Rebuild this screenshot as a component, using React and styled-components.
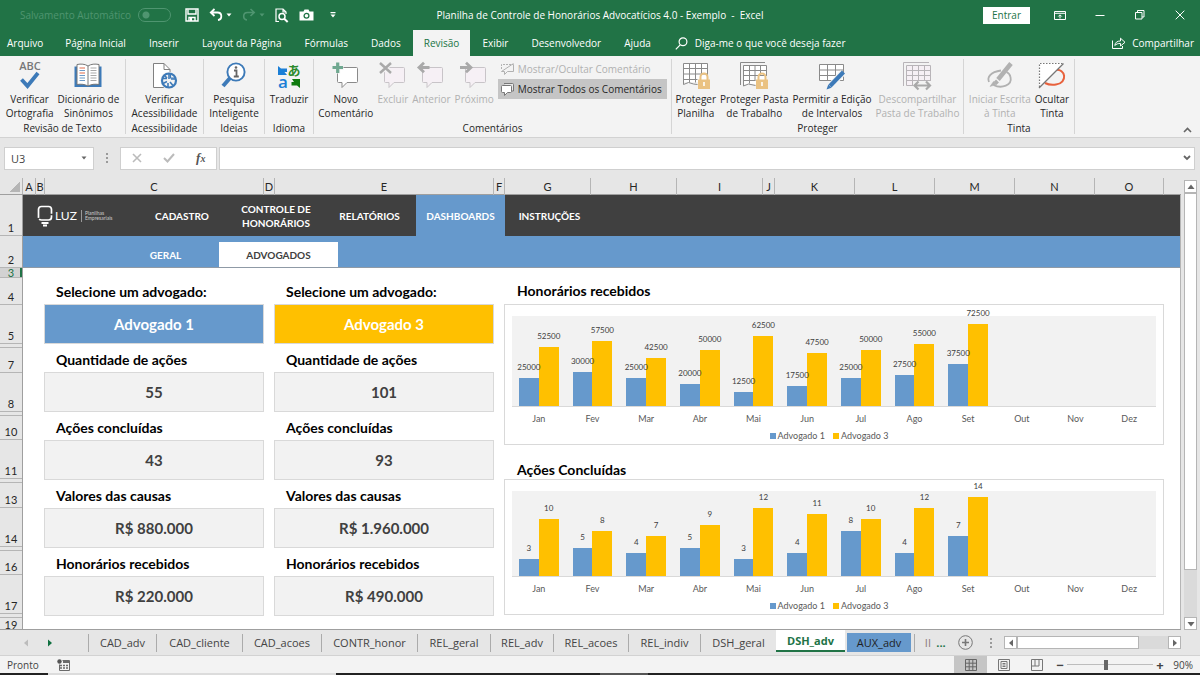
import React, { useState } from 'react';
import styled, { createGlobalStyle } from 'styled-components';

const UI_FONT = '"Open Sans", "Noto Sans", sans-serif';
const SHEET_FONT = 'Lato, "Open Sans", sans-serif';

const BLUE = '#6699cc';
const YELLOW = '#ffc000';

const RIBBON_TABS = [
  'Arquivo',
  'Página Inicial',
  'Inserir',
  'Layout da Página',
  'Fórmulas',
  'Dados',
  'Revisão',
  'Exibir',
  'Desenvolvedor',
  'Ajuda',
];

const COLUMNS = [
  ['A', 13],
  ['B', 9],
  ['C', 219],
  ['D', 11],
  ['E', 219],
  ['F', 11],
  ['G', 86],
  ['H', 86],
  ['I', 86],
  ['J', 12],
  ['K', 80],
  ['L', 80],
  ['M', 80],
  ['N', 80],
  ['O', 69],
  ['', 17],
];

const ROWS = [
  ['1', 41],
  ['2', 32],
  ['3', 10],
  ['4', 27],
  ['5', 39],
  ['', 4],
  ['7', 25],
  ['8', 39],
  ['', 4],
  ['10', 24],
  ['11', 39],
  ['', 4],
  ['13', 25],
  ['14', 39],
  ['', 4],
  ['16', 24],
  ['17', 39],
  ['', 4],
  ['19', 11],
];

const SHEET_TABS = [
  ['CAD_adv', 68],
  ['CAD_cliente', 86],
  ['CAD_acoes', 79],
  ['CONTR_honor', 96],
  ['REL_geral', 73],
  ['REL_adv', 63],
  ['REL_acoes', 75],
  ['REL_indiv', 72],
  ['DSH_geral', 76],
];

const MONTHS = ['Jan', 'Fev', 'Mar', 'Abr', 'Mai', 'Jun', 'Jul', 'Ago', 'Set', 'Out', 'Nov', 'Dez'];

const FEES = [
  [25000, 52500],
  [30000, 57500],
  [25000, 42500],
  [20000, 50000],
  [12500, 62500],
  [17500, 47500],
  [25000, 50000],
  [27500, 55000],
  [37500, 72500],
];

const CLOSED = [
  [3, 10],
  [5, 8],
  [4, 7],
  [5, 9],
  [3, 12],
  [4, 11],
  [8, 10],
  [4, 12],
  [7, 14],
];

const LAWYERS = ['Advogado 1', 'Advogado 2', 'Advogado 3'];

/* ---------- icons ---------- */

const SaveIcon = () => (
  <svg width="14" height="14" viewBox="0 0 14 14" fill="none" stroke="#fff" strokeWidth="1.4">
    <path d="M1 1h12v12H1z" />
    <path d="M3 1.5v4.5h8V1.5M4 13V9.5h6V13" />
    <path d="M5 10h2v3H5z" fill="#fff" stroke="none" />
  </svg>
);

const UndoIcon = () => (
  <svg width="14" height="14" viewBox="0 0 14 14" fill="none" stroke="currentColor" strokeWidth="1.8">
    <path d="M5.5 1L1.8 4.5l3.7 3.5M2 4.5h6.5c5 0 5 7 .5 7.5" />
  </svg>
);

const RedoIcon = () => (
  <svg width="14" height="14" viewBox="0 0 14 14" fill="none" stroke="currentColor" strokeWidth="1.6">
    <path d="M8.5 1l3.7 3.5L8.5 8M12 4.5H5.5c-5 0-5 7-.5 7.5" />
  </svg>
);

const Caret = () => (
  <svg width="6" height="4" viewBox="0 0 6 4">
    <path d="M.5.5h5L3 3.5z" fill="currentColor" />
  </svg>
);

const PreviewIcon = () => (
  <svg width="14" height="15" viewBox="0 0 14 15" fill="none" stroke="#fff" strokeWidth="1.2">
    <path d="M4 13.5H1V1h7l3 3v2M8 1v3h3" />
    <circle cx="7" cy="8.5" r="3" strokeWidth="1.5" />
    <path d="M9.2 10.8l3.5 3.2" strokeWidth="2" />
  </svg>
);

const CameraIcon = () => (
  <svg width="15" height="12" viewBox="0 0 15 12">
    <path d="M.5 2.500h4L5.500.5h4l1 2h4V11.500H.5z" fill="#fff" />
    <circle cx="7.5" cy="6.8" r="2.400" fill="none" stroke="#217346" strokeWidth="1.3" />
  </svg>
);

const MoreIcon = () => (
  <svg width="6" height="8" viewBox="0 0 6 8" fill="#fff">
    <path d="M.5 1h5v1.2h-5zM.5 3.5h5L3 6.5z" />
  </svg>
);

const RibbonOptionsIcon = () => (
  <svg width="12" height="9" viewBox="0 0 12 9" fill="none" stroke="#fff">
    <path d="M.5.5h11v8H.5zM.5 2.3h11" />
    <path d="M6 7.5V4M4.3 5.5L6 3.8l1.7 1.7" />
  </svg>
);

const MinimizeIcon = () => (
  <svg width="10" height="10" viewBox="0 0 10 10" stroke="#fff">
    <path d="M.5 5.5h9" />
  </svg>
);

const RestoreIcon = () => (
  <svg width="10" height="10" viewBox="0 0 10 10" fill="none" stroke="#fff">
    <path d="M.5 2.5h6.500v6.500H.5zM2.500 2.500V.5H9v6.500H7" />
  </svg>
);

const CloseIcon = () => (
  <svg width="10" height="10" viewBox="0 0 10 10" stroke="#fff">
    <path d="M.7.7l8.600 8.600M9.300.7L.7 9.300" />
  </svg>
);

const SearchIcon = () => (
  <svg width="13" height="13" viewBox="0 0 13 13" fill="none" stroke="#fff" strokeWidth="1.2">
    <circle cx="8" cy="4.8" r="3.9" />
    <path d="M5.2 7.8L.8 12.3" />
  </svg>
);

const ShareIcon = () => (
  <svg width="14" height="12" viewBox="0 0 14 12" fill="none" stroke="#fff">
    <path d="M.5 3.5v8h10V9" />
    <path d="M2.8 8.5c.4-3.2 2.4-4.5 5.700-4.500V1.200L13 5.300 8.500 9V6.500C6 6.400 4.300 7 2.800 8.500z" />
  </svg>
);

const SpellIcon = () => (
  <svg width="28" height="30" viewBox="0 0 28 30">
    <text x="14" y="9" textAnchor="middle" fontFamily="Open Sans" fontSize="11" fontWeight="600" fill="#777">
      ABC
    </text>
    <path d="M5.5 18.5l6 6.500L22 12" fill="none" stroke="#3d7ab8" strokeWidth="3.8" />
  </svg>
);

const BookIcon = () => (
  <svg width="28" height="26" viewBox="0 0 28 26">
    <path d="M.5 3.5h27V24H.5z" fill="#3d7ab8" />
    <path d="M3 1.5c4-.8 8-.5 11 1.500 3-2 7-2.300 11-1.500v20c-4-.6-8-.3-11 1.500-3-1.800-7-2.100-11-1.500z" fill="#fff" stroke="#777" />
    <path d="M14 3v20" stroke="#777" />
    <path d="M5.5 5h5.500M5.500 10h5.500" stroke="#e06a4a" strokeWidth="1.2" />
    <path d="M5.5 7.5h5.500M5.500 12.500h5.500M5.500 15h5.500M5.500 17.500h5.500" stroke="#6d9bc8" />
    <path d="M16.5 5h6M16.500 7.500h6M16.500 10h6M16.500 12.500h6M16.500 15h6M16.500 17.500h6" stroke="#a9a9a9" />
  </svg>
);

const AccessIcon = () => (
  <svg width="28" height="28" viewBox="0 0 28 28" fill="none">
    <path d="M3.5 1.5h10.500l6 6V25.500H3.500z" fill="#fff" stroke="#808080" />
    <path d="M14 1.5v6h6" stroke="#808080" />
    <circle cx="19" cy="18.5" r="8.7" fill="#f3f3f3" />
    <circle cx="19" cy="18.5" r="7" stroke="#3d7ab8" strokeWidth="2.2" />
    <path d="M19 12v5M12 16.500h5M13 21.500l4-2M25 17h-4M20 20l3 3.500M18 21v4M14.500 13.500l2.500 2.500" stroke="#3d7ab8" strokeWidth="1.6" />
    <path d="M20.500 12v4H25" stroke="#3d7ab8" strokeWidth="1.2" />
  </svg>
);

const InsightIcon = () => (
  <svg width="26" height="27" viewBox="0 0 26 27" fill="none">
    <path d="M9.5 15.5L2 24" stroke="#3d7ab8" strokeWidth="4" />
    <circle cx="15" cy="10" r="8.600" fill="#fff" stroke="#3d7ab8" strokeWidth="1.9" />
    <path d="M13 8.5h2.500V14M12.800 14.500h5" stroke="#666" strokeWidth="1.8" />
    <circle cx="15" cy="5.5" r="1.300" fill="#666" />
  </svg>
);

const TranslateIcon = () => (
  <svg width="26" height="28" viewBox="0 0 26 28">
    <text x="7" y="26" textAnchor="middle" fontFamily="Open Sans" fontSize="17" fontWeight="600" fill="#1b7fd6">
      a
    </text>
    <text x="18" y="13" textAnchor="middle" fontFamily="Noto Sans CJK JP" fontSize="13" fontWeight="700" fill="#2c8a2c">
      あ
    </text>
    <path d="M2 4l3 2.500h6v3.500H8.500l2.500 3H2z" fill="#1b7fd6" />
    <path d="M24 17v9l-3-2.500h-5.500v-3.500H18L16 17z" fill="#107c10" />
  </svg>
);

const bubble = 'M6.5 5.5h18a1 1 0 011 1v13a1 1 0 01-1 1H15l-5 5v-5H6.500a1 1 0 01-1-1v-13a1 1 0 011-1z';

const NewCommentIcon = () => (
  <svg width="28" height="28" viewBox="0 0 28 28">
    <path d={bubble} fill="#fff" stroke="#8a8a8a" />
    <path d="M0 5.5h11.500M5.700 0v11.500" stroke="#f3f3f3" strokeWidth="5" />
    <path d="M.5 5.5h10.500M5.700.5v10.500" stroke="#6fa890" strokeWidth="3.2" />
  </svg>
);

const DeleteCommentIcon = () => (
  <svg width="28" height="28" viewBox="0 0 28 28">
    <path d={bubble} fill="#f6f0f5" stroke="#c8c4c8" />
    <path d="M1 1l11 10M12 1L1 11" stroke="#f3f3f3" strokeWidth="4.5" />
    <path d="M1 1l11 10M12 1L1 11" stroke="#a9a9a9" strokeWidth="2.4" />
  </svg>
);

const PrevCommentIcon = () => (
  <svg width="28" height="28" viewBox="0 0 28 28">
    <path d={bubble} fill="#f6f0f5" stroke="#c8c4c8" />
    <path d="M12.5 5.500H2M7 .8L2 5.500l5 4.700" fill="none" stroke="#a9a9a9" strokeWidth="2.8" />
  </svg>
);

const NextCommentIcon = () => (
  <svg width="28" height="28" viewBox="0 0 28 28">
    <path d={bubble} fill="#f6f0f5" stroke="#c8c4c8" />
    <path d="M0 5.5h11M6 .8l5 4.700-5 4.700" fill="none" stroke="#a9a9a9" strokeWidth="2.8" />
  </svg>
);

const ToggleCommentIcon = () => (
  <svg width="13" height="13" viewBox="0 0 13 13" fill="none" stroke="#b1b1b1">
    <path d="M.5 6V1.500h12" strokeDasharray="2 1" />
    <path d="M12.5 1.500v7H6.500l-3 3v-3h-3l12-8" />
  </svg>
);

const AllCommentsIcon = () => (
  <svg width="13" height="13" viewBox="0 0 13 13" fill="#fff" stroke="#777">
    <path d="M3 .5h8.500a1 1 0 011 1V8h-2" fill="#e8e8e8" />
    <path d="M1.5 2.500h8a1 1 0 011 1v5a1 1 0 01-1 1H6.500l-3 3v-3h-2a1 1 0 01-1-1v-5a1 1 0 011-1z" />
  </svg>
);

const Lock = () => (
  <g>
    <path d="M18.5 18v-3a3.500 3.500 0 017 0v3" fill="none" stroke="#eac282" strokeWidth="2" />
    <path d="M16 17.500h12V27H16z" fill="#eac282" />
    <path d="M22 20v4" stroke="#fff" strokeWidth="1.6" />
  </g>
);

const ProtectSheetIcon = () => (
  <svg width="28" height="28" viewBox="0 0 28 28" fill="none">
    <path d="M1.5 1.500h24V20H1.500z" fill="#fff" />
    <path d="M1.5 22.500v-21h24V14M1.500 6.500h24M1.500 12h24M1.500 17.500h14M7.500 1.500v19M13.500 1.500v19M19.500 1.500v11M1.500 22.500l5-2 5 1.500 4 .5" stroke="#8a8a8a" />
    <Lock />
  </svg>
);

const ProtectBookIcon = () => (
  <svg width="28" height="28" viewBox="0 0 28 28" fill="none">
    <path d="M.5 23V.5H25" stroke="#8a8a8a" />
    <path d="M3.5 3.500h23V22H3.500z" fill="#fff" />
    <path d="M3.5 24V3.500h23V14M3.500 8.500h23M3.500 13.500h23M3.500 18.500h12M9.500 3.500v18M15 3.500v15M20.500 3.500v9M3.500 24l5-2 7 1.500" stroke="#8a8a8a" />
    <Lock />
  </svg>
);

const AllowEditIcon = () => (
  <svg width="28" height="28" viewBox="0 0 28 28" fill="none">
    <path d="M1.5 2.500h24v16h-24z" fill="#fff" stroke="#8a8a8a" />
    <path d="M1.5 8h24M1.500 13.500h24M9.500 2.500v16M17.500 2.500v16" stroke="#8a8a8a" />
    <path d="M25 10.500L11.500 25" stroke="#f3f3f3" strokeWidth="6.5" />
    <path d="M25.5 10L12 24" stroke="#3d7ab8" strokeWidth="4.2" />
    <path d="M8.5 27.500l1.800-5 3.200 3.200z" fill="#3d7ab8" />
  </svg>
);

const UnshareIcon = () => (
  <svg width="28" height="28" viewBox="0 0 28 28" fill="none">
    <path d="M.5 24V.5H26" stroke="#b8b4b8" />
    <path d="M3.5 3.500h24v20h-24z" fill="#f6f0f5" stroke="#b8b4b8" />
    <path d="M3.5 8.500h24M3.500 13.500h24M3.500 18.500h24M9.500 3.500v20M15.500 3.500v20M21.500 3.500v20" stroke="#b8b4b8" />
    <path d="M10 23h18" stroke="#f3f3f3" strokeWidth="8" />
    <path d="M11.5 23.500H27M15.500 19.500l-4 4 4 4M23 19.500l4 4-4 4" stroke="#a9a9a9" strokeWidth="2.2" />
  </svg>
);

const InkIcon = () => (
  <svg width="28" height="28" viewBox="0 0 28 28" fill="none" stroke="#b1b1b1">
    <path d="M15 8.500C4 10 1 15.500 3 20M7.500 23c8 4 19 .5 17-8-.5-2.500-2-4-4-5" strokeWidth="1.8" />
    <path d="M25 1.500L12 17.500" strokeWidth="4.5" />
    <path d="M11.5 19l-2.500 2.500" strokeWidth="4" />
    <path d="M4 24.500l3.500-5 2.500 3z" fill="#b1b1b1" strokeWidth=".5" />
  </svg>
);

const HideInkIcon = () => (
  <svg width="28" height="28" viewBox="0 0 28 28" fill="none">
    <path d="M17 8c11-2 13 13 1 14.500-4 .6-8 0-11-1.500" stroke="#e8613c" strokeWidth="2" />
    <path d="M1 1h25L1 26z" fill="#fff" />
    <path d="M25.5 1.500L1 26" stroke="#777" strokeWidth="1.2" />
    <path d="M1.5 25V1.500H25" stroke="#777" strokeWidth="1.2" strokeDasharray="1.5 1.5" />
  </svg>
);

const LuzBulb = () => (
  <svg width="16" height="22" viewBox="0 0 16 22" fill="none" stroke="#fff">
    <path d="M4.5 1.500h7q3 0 3 3v7.500q0 3-3 3h-7q-3 0-3-3V4.500q0-3 3-3z" strokeWidth="1.7" strokeDasharray="16 1.5" />
    <path d="M4.5 18h7M6 20.500h4" strokeWidth="1.8" />
  </svg>
);

const RecordIcon = () => (
  <svg width="13" height="12" viewBox="0 0 13 12" fill="none" stroke="#6a6a6a">
    <path d="M5.5 1.500h7v10h-10V5.500" />
    <path d="M6 3h6.500" strokeWidth="2" />
    <path d="M3 6.500h9M3 9h9" strokeDasharray="2 1" strokeWidth="1.3" />
    <circle cx="2.5" cy="2.5" r="2.2" fill="#555" stroke="none" />
  </svg>
);

const GridViewIcon = () => (
  <svg width="12" height="12" viewBox="0 0 12 12" fill="none" stroke="#666">
    <path d="M.5.5h11v11H.5zM.5 4.200h11M.5 7.800h11M4.200.5v11M7.800.5v11" />
  </svg>
);

const PageViewIcon = () => (
  <svg width="12" height="12" viewBox="0 0 12 12" fill="none" stroke="#777">
    <path d="M.5.5h11v11H.5zM3 2.500h6v7H3zM4.500 4.500h3M4.500 6h3M4.500 7.500h3" />
  </svg>
);

const BreakViewIcon = () => (
  <svg width="12" height="12" viewBox="0 0 12 12" fill="none" stroke="#777">
    <path d="M.5.5h11v11H.5zM4 .5V7M.5 7h7.500V.5" />
  </svg>
);

const PlusCircle = () => (
  <svg width="15" height="15" viewBox="0 0 15 15" fill="none" stroke="#777">
    <circle cx="7.5" cy="7.5" r="6.8" />
    <path d="M7.5 4v7M4 7.500h7" strokeWidth="1.6" />
  </svg>
);

const ARROWS = {
  up: 'M4 1.5L7.5 6H.5z',
  down: 'M.5 2h7L4 6.5z',
  left: 'M6 .5v7L2 4z',
  right: 'M2 .5v7L6 4z',
};

const Arrow = ({ dir }) => (
  <svg width="8" height="8" viewBox="0 0 8 8">
    <path d={ARROWS[dir]} fill="currentColor" />
  </svg>
);

/* ---------- pieces ---------- */

function BigButton({ icon, lines, disabled }) {
  return (
    <RibbonButton disabled={disabled}>
      <IconSlot>{icon}</IconSlot>
      {lines.map((line) => (
        <span key={line}>{line}</span>
      ))}
    </RibbonButton>
  );
}

function Group({ name, width, children }) {
  return (
    <RibbonGroup $width={width} aria-label={name}>
      <GroupBody>{children}</GroupBody>
      <GroupName>{name}</GroupName>
    </RibbonGroup>
  );
}

function LawyerColumn({ id, initial, color, stats }) {
  const [lawyer, setLawyer] = useState(initial);
  return (
    <Fields>
      <Field>
        <FieldLabel as="label" htmlFor={id}>
          Selecione um advogado:
        </FieldLabel>
        <LawyerSelect id={id} $color={color} value={lawyer} onChange={(e) => setLawyer(e.target.value)}>
          {LAWYERS.map((name) => (
            <option key={name}>{name}</option>
          ))}
        </LawyerSelect>
      </Field>
      {stats.map(([label, value]) => (
        <Field key={label}>
          <FieldLabel>{label}</FieldLabel>
          <StatBox>{value}</StatBox>
        </Field>
      ))}
    </Fields>
  );
}

function Chart({ data, max, height }) {
  return (
    <ChartBox>
      <Plot $height={height}>
        {MONTHS.map((month, i) => (
          <Month key={month}>
            {(data[i] || []).map((value, s) => (
              <Series key={s}>
                <ValueLabel>{value}</ValueLabel>
                <Bar $color={s === 0 ? BLUE : YELLOW} style={{ height: `${(value / max) * 100}%` }} />
              </Series>
            ))}
          </Month>
        ))}
      </Plot>
      <Axis>
        {MONTHS.map((month) => (
          <span key={month}>{month}</span>
        ))}
      </Axis>
      <Legend>
        <LegendItem $color={BLUE}>Advogado 1</LegendItem>
        <LegendItem $color={YELLOW}>Advogado 3</LegendItem>
      </Legend>
    </ChartBox>
  );
}

function App() {
  const [zoom, setZoom] = useState(45);

  return (
    <>
      <GlobalStyle />
      <Page>
        <TitleBar>
          <QuickAccess>
            <AutoSave>
              Salvamento Automático
              <Switch type="checkbox" disabled />
            </AutoSave>
            <ToolButton aria-label="Salvar"><SaveIcon /></ToolButton>
            <ToolButton aria-label="Desfazer"><UndoIcon /><Caret /></ToolButton>
            <ToolButton aria-label="Refazer" disabled><RedoIcon /><Caret /></ToolButton>
            <ToolButton aria-label="Visualizar impressão"><PreviewIcon /></ToolButton>
            <ToolButton aria-label="Câmera"><CameraIcon /></ToolButton>
            <ToolButton aria-label="Personalizar"><MoreIcon /></ToolButton>
          </QuickAccess>
          <DocTitle>Planilha de Controle de Honorários Advocatícios 4.0 - Exemplo&nbsp; -&nbsp; Excel</DocTitle>
          <WindowButtons>
            <SignIn>Entrar</SignIn>
            <WindowButton aria-label="Opções da faixa"><RibbonOptionsIcon /></WindowButton>
            <WindowButton aria-label="Minimizar"><MinimizeIcon /></WindowButton>
            <WindowButton aria-label="Restaurar"><RestoreIcon /></WindowButton>
            <WindowButton aria-label="Fechar"><CloseIcon /></WindowButton>
          </WindowButtons>
        </TitleBar>

        <TabBar>
          {RIBBON_TABS.map((tab) => (
            <RibbonTab key={tab} $active={tab === 'Revisão'}>
              {tab}
            </RibbonTab>
          ))}
          <TellMe>
            <SearchIcon />
            Diga-me o que você deseja fazer
          </TellMe>
          <Share>
            <ShareIcon />
            Compartilhar
          </Share>
        </TabBar>

        <Ribbon>
          <Group name="Revisão de Texto" width={126}>
            <BigButton icon={<SpellIcon />} lines={['Verificar', 'Ortografia']} />
            <BigButton icon={<BookIcon />} lines={['Dicionário de', 'Sinônimos']} />
          </Group>
          <Group name="Acessibilidade" width={78}>
            <BigButton icon={<AccessIcon />} lines={['Verificar', 'Acessibilidade']} />
          </Group>
          <Group name="Ideias" width={61}>
            <BigButton icon={<InsightIcon />} lines={['Pesquisa', 'Inteligente']} />
          </Group>
          <Group name="Idioma" width={49}>
            <BigButton icon={<TranslateIcon />} lines={['Traduzir']} />
          </Group>
          <Group name="Comentários" width={358}>
            <BigButton icon={<NewCommentIcon />} lines={['Novo', 'Comentário']} />
            <BigButton icon={<DeleteCommentIcon />} lines={['Excluir']} disabled />
            <BigButton icon={<PrevCommentIcon />} lines={['Anterior']} disabled />
            <BigButton icon={<NextCommentIcon />} lines={['Próximo']} disabled />
            <SmallButtons>
              <SmallButton disabled>
                <ToggleCommentIcon />
                Mostrar/Ocultar Comentário
              </SmallButton>
              <SmallButton $pressed>
                <AllCommentsIcon />
                Mostrar Todos os Comentários
              </SmallButton>
            </SmallButtons>
          </Group>
          <Group name="Proteger" width={292}>
            <BigButton icon={<ProtectSheetIcon />} lines={['Proteger', 'Planilha']} />
            <BigButton icon={<ProtectBookIcon />} lines={['Proteger Pasta', 'de Trabalho']} />
            <BigButton icon={<AllowEditIcon />} lines={['Permitir a Edição', 'de Intervalos']} />
            <BigButton icon={<UnshareIcon />} lines={['Descompartilhar', 'Pasta de Trabalho']} disabled />
          </Group>
          <Group name="Tinta" width={111}>
            <BigButton icon={<InkIcon />} lines={['Iniciar Escrita', 'à Tinta']} disabled />
            <BigButton icon={<HideInkIcon />} lines={['Ocultar', 'Tinta']} />
          </Group>
          <Collapse aria-label="Recolher faixa">
            <svg width="9" height="6" viewBox="0 0 9 6" fill="none" stroke="#666" strokeWidth="1.6">
              <path d="M1 5l3.5-3.5L8 5" />
            </svg>
          </Collapse>
        </Ribbon>

        <FormulaBar>
          <NameBox>
            <NameInput aria-label="Caixa de nome" defaultValue="U3" />
            <Caret />
          </NameBox>
          <Dots />
          <FormulaButtons>
            <FormulaButton aria-label="Cancelar" disabled>
              <svg width="10" height="10" viewBox="0 0 10 10" stroke="#bbb" strokeWidth="1.6">
                <path d="M1 1l8 8M9 1L1 9" />
              </svg>
            </FormulaButton>
            <FormulaButton aria-label="Inserir" disabled>
              <svg width="12" height="10" viewBox="0 0 12 10" fill="none" stroke="#bbb" strokeWidth="2">
                <path d="M1 5l3.5 3.5L11 1" />
              </svg>
            </FormulaButton>
            <FormulaButton aria-label="Inserir função">
              f<small>x</small>
            </FormulaButton>
          </FormulaButtons>
          <FormulaBox>
            <FormulaInput aria-label="Barra de fórmulas" />
            <svg width="8" height="6" viewBox="0 0 8 6" fill="none" stroke="#666" strokeWidth="1.8">
              <path d="M1 1l3 3 3-3" />
            </svg>
          </FormulaBox>
        </FormulaBar>

        <Workspace>
          <Sheet>
            <ColumnHeaders>
              <Corner />
              <ColumnTrack>
                {COLUMNS.map(([name], i) => (
                  <ColumnHeader key={i}>{name}</ColumnHeader>
                ))}
              </ColumnTrack>
            </ColumnHeaders>
            <SheetBody>
              <RowHeaders>
                {ROWS.map(([name, height], i) => (
                  <RowHeader key={i} $height={height} $selected={name === '3'}>
                    {name}
                  </RowHeader>
                ))}
              </RowHeaders>
              <Canvas>
                <MainMenu>
                  <Brand>
                    <LuzBulb />
                    <BrandName>LUZ</BrandName>
                    <BrandTag>
                      Planilhas
                      <br />
                      Empresariais
                    </BrandTag>
                  </Brand>
                  <MenuLink href="#cadastro" $width={94}>CADASTRO</MenuLink>
                  <MenuLink href="#controle" $width={94}>CONTROLE DE HONORÁRIOS</MenuLink>
                  <MenuLink href="#relatorios" $width={93}>RELATÓRIOS</MenuLink>
                  <MenuLink href="#dashboards" $width={89} $active>DASHBOARDS</MenuLink>
                  <MenuLink href="#instrucoes" $width={89}>INSTRUÇÕES</MenuLink>
                </MainMenu>
                <SubMenu>
                  <SubLink href="#geral">GERAL</SubLink>
                  <SubLink href="#advogados" $active>ADVOGADOS</SubLink>
                </SubMenu>
                <Dashboard>
                  <LawyerColumn
                    id="lawyer-a"
                    initial="Advogado 1"
                    color={BLUE}
                    stats={[
                      ['Quantidade de ações', '55'],
                      ['Ações concluídas', '43'],
                      ['Valores das causas', 'R$ 880.000'],
                      ['Honorários recebidos', 'R$ 220.000'],
                    ]}
                  />
                  <LawyerColumn
                    id="lawyer-b"
                    initial="Advogado 3"
                    color={YELLOW}
                    stats={[
                      ['Quantidade de ações', '101'],
                      ['Ações concluídas', '93'],
                      ['Valores das causas', 'R$ 1.960.000'],
                      ['Honorários recebidos', 'R$ 490.000'],
                    ]}
                  />
                  <Charts>
                    <ChartTitle $height={28} $gap={4}>Honorários recebidos</ChartTitle>
                    <Chart data={FEES} max={80000} height={91} />
                    <ChartTitle $height={34} $gap={0}>Ações Concluídas</ChartTitle>
                    <Chart data={CLOSED} max={15} height={86} />
                  </Charts>
                </Dashboard>
              </Canvas>
            </SheetBody>
          </Sheet>
          <VScroll>
            <ScrollButton aria-label="Rolar para cima"><Arrow dir="up" /></ScrollButton>
            <VTrack><VThumb /></VTrack>
            <ScrollButton aria-label="Rolar para baixo"><Arrow dir="down" /></ScrollButton>
          </VScroll>
        </Workspace>

        <SheetTabs>
          <TabNav>
            <TabNavButton aria-label="Guias anteriores" disabled><Arrow dir="left" /></TabNavButton>
            <TabNavButton aria-label="Próximas guias"><Arrow dir="right" /></TabNavButton>
          </TabNav>
          {SHEET_TABS.map(([name, width]) => (
            <SheetTab key={name} $width={width}>{name}</SheetTab>
          ))}
          <ActiveSheetTab>DSH_adv</ActiveSheetTab>
          <AuxSheetTab>AUX_adv</AuxSheetTab>
          <HiddenTab>II</HiddenTab>
          <MoreTabs aria-label="Mais guias">...</MoreTabs>
          <AddTab aria-label="Nova planilha"><PlusCircle /></AddTab>
          <Dots />
          <HScroll>
            <ScrollButton aria-label="Rolar para a esquerda"><Arrow dir="left" /></ScrollButton>
            <HTrack><HThumb /></HTrack>
            <ScrollButton aria-label="Rolar para a direita"><Arrow dir="right" /></ScrollButton>
          </HScroll>
        </SheetTabs>

        <StatusBar>
          <Status>Pronto</Status>
          <RecordIcon />
          <StatusRight>
            <ViewButton aria-label="Normal" $active><GridViewIcon /></ViewButton>
            <ViewButton aria-label="Layout da página"><PageViewIcon /></ViewButton>
            <ViewButton aria-label="Quebra de página"><BreakViewIcon /></ViewButton>
            <ZoomButton aria-label="Reduzir">−</ZoomButton>
            <ZoomRange
              type="range"
              aria-label="Zoom"
              value={zoom}
              onChange={(e) => setZoom(Number(e.target.value))}
            />
            <ZoomButton aria-label="Ampliar">+</ZoomButton>
            <ZoomValue>90%</ZoomValue>
          </StatusRight>
        </StatusBar>
        <TaskbarEdge />
      </Page>
    </>
  );
}

export default App;

const GlobalStyle = createGlobalStyle`
  * {
    box-sizing: border-box;
  }

  body {
    margin: 0;
    background: #e6e6e6;
    font-family: ${UI_FONT};
    font-size: 10px;
    color: #262626;
  }

  button, input, select {
    margin: 0;
    padding: 0;
    border: none;
    background: transparent;
    font: inherit;
    color: inherit;
  }

  svg {
    display: block;
    flex-shrink: 0;
    overflow: visible;
  }
`;

const Page = styled.div`
  display: flex;
  flex-direction: column;
  min-height: 100vh;
`;

const TitleBar = styled.header`
  display: grid;
  grid-template-columns: 1fr auto 1fr;
  align-items: center;
  height: 30px;
  background: #217346;
  color: #fff;
`;

const QuickAccess = styled.div`
  display: flex;
  align-items: center;
  gap: 10px;
  padding-left: 20px;
`;

const AutoSave = styled.label`
  display: flex;
  align-items: center;
  gap: 7px;
  margin-right: 4px;
  color: #4f9570;
  white-space: nowrap;
`;

const Switch = styled.input`
  appearance: none;
  width: 33px;
  height: 14px;
  border: 1px solid #4f9570;
  border-radius: 7px;
  background: radial-gradient(circle at 7px 6px, #4f9570 3px, transparent 4px);
`;

const ToolButton = styled.button`
  display: flex;
  align-items: center;
  gap: 3px;

  &:disabled {
    color: #4f9570;
  }

  &:last-child {
    margin-left: 6px;
  }
`;

const DocTitle = styled.h1`
  margin: 0;
  font-size: 10px;
  font-weight: 400;
  white-space: nowrap;
`;

const WindowButtons = styled.div`
  display: flex;
  align-items: center;
  justify-content: flex-end;
`;

const SignIn = styled.button`
  width: 47px;
  height: 17px;
  margin-right: 10px;
  background: #fff;
  color: #217346;
`;

const WindowButton = styled.button`
  display: flex;
  align-items: center;
  justify-content: center;
  width: 40px;
  height: 28px;
`;

const TabBar = styled.nav`
  display: flex;
  gap: 1px;
  height: 26px;
  background: #217346;
  color: #fff;
`;

const RibbonTab = styled.button`
  padding: 0 11px;
  white-space: nowrap;
  background: ${(props) => (props.$active ? '#f3f3f3' : 'transparent')};
  color: ${(props) => (props.$active ? '#217346' : '#fff')};

  &:first-child {
    padding: 0 10px 0 7px;
  }
`;

const TellMe = styled.button`
  display: flex;
  align-items: center;
  gap: 7px;
  margin-left: 12px;
  white-space: nowrap;
`;

const Share = styled.button`
  display: flex;
  align-items: center;
  gap: 6px;
  margin-left: auto;
  padding-right: 6px;
`;

const Ribbon = styled.section`
  display: flex;
  height: 82px;
  padding-top: 3px;
  background: #f3f3f3;
  border-bottom: 1px solid #d2d2d2;
`;

const RibbonGroup = styled.div`
  display: flex;
  flex-direction: column;
  flex: 0 0 ${(props) => props.$width}px;
  margin-bottom: 3px;
  border-right: 1px solid #d5d5d5;
`;

const GroupBody = styled.div`
  display: flex;
  justify-content: center;
  flex: 1;
  gap: 4px;
`;

const GroupName = styled.div`
  height: 11px;
  line-height: 11px;
  text-align: center;
`;

const RibbonButton = styled.button`
  display: flex;
  flex-direction: column;
  align-items: center;
  line-height: 14px;
  white-space: nowrap;

  &:disabled {
    color: #b1b1b1;
  }
`;

const IconSlot = styled.span`
  display: flex;
  align-items: center;
  justify-content: center;
  height: 33px;
  min-width: 30px;
`;

const SmallButtons = styled.div`
  display: flex;
  flex-direction: column;
`;

const SmallButton = styled.button`
  display: flex;
  align-items: center;
  gap: 4px;
  height: 20px;
  padding: 0 5px 0 3px;
  white-space: nowrap;
  background: ${(props) => (props.$pressed ? '#c5c5c5' : 'transparent')};

  &:disabled {
    color: #b1b1b1;
  }
`;

const Collapse = styled.button`
  align-self: flex-end;
  margin-left: auto;
  padding: 4px 8px;
`;

const FormulaBar = styled.div`
  display: flex;
  align-items: center;
  gap: 2px;
  height: 40px;
  padding: 0 5px 0 4px;
`;

const NameBox = styled.div`
  display: flex;
  align-items: center;
  width: 90px;
  height: 23px;
  padding: 0 6px;
  background: #fff;
  border: 1px solid #cfcfcf;
  color: #666;
`;

const NameInput = styled.input`
  flex: 1;
  min-width: 0;
  font-size: 11px;
  color: #444;
`;

const Dots = styled.span`
  width: 22px;
  height: 10px;
  background: radial-gradient(circle, #9a9a9a 1px, transparent 1px) center / 22px 4px;
`;

const FormulaButtons = styled.div`
  display: flex;
  align-items: center;
  justify-content: space-around;
  width: 97px;
  height: 23px;
  background: #fff;
  border: 1px solid #cfcfcf;
`;

const FormulaButton = styled.button`
  font-family: "Liberation Serif", serif;
  font-size: 13px;
  font-style: italic;
  font-weight: 700;
  color: #555;

  small {
    font-size: 10px;
  }
`;

const FormulaBox = styled.div`
  display: flex;
  align-items: center;
  flex: 1;
  height: 23px;
  padding-right: 3px;
  background: #fff;
  border: 1px solid #cfcfcf;
`;

const FormulaInput = styled.input`
  flex: 1;
`;

const Workspace = styled.main`
  display: flex;
  flex: 1;
  gap: 3px;
  padding-right: 3px;
`;

const Sheet = styled.div`
  display: flex;
  flex-direction: column;
  flex: 1;
  min-width: 0;
  font-family: ${SHEET_FONT};
`;

const ColumnHeaders = styled.div`
  display: flex;
  height: 17px;
  border-bottom: 1px solid #9f9f9f;
`;

const Corner = styled.div`
  width: 23px;
  border-right: 1px solid #b5b5b5;
  background: linear-gradient(135deg, transparent 50%, #b5b5b5 50%) 10px 4px / 10px 10px no-repeat;
`;

const ColumnTrack = styled.div`
  display: grid;
  grid-template-columns: ${COLUMNS.map(([, width]) => `${width}fr`).join(' ')};
  flex: 1;
`;

const ColumnHeader = styled.div`
  min-width: 0;
  border-right: 1px solid #b5b5b5;
  font-size: 11px;
  line-height: 17px;
  text-align: center;

  &:last-child {
    border: none;
  }
`;

const SheetBody = styled.div`
  display: flex;
  flex: 1;
  border-bottom: 1px solid #9f9f9f;
`;

const RowHeaders = styled.div`
  width: 23px;
  border-right: 1px solid #9f9f9f;
`;

const RowHeader = styled.div`
  display: flex;
  align-items: flex-end;
  justify-content: center;
  height: ${(props) => props.$height}px;
  padding-bottom: ${(props) => (props.$height > 12 ? 3 : 0)}px;
  border-bottom: 1px solid #b5b5b5;
  overflow: hidden;
  font-size: 11px;
  line-height: 9px;
  color: ${(props) => (props.$selected ? '#217346' : '#262626')};
  background: ${(props) => (props.$selected ? '#d2d2d2' : 'transparent')};
  box-shadow: ${(props) => (props.$selected ? 'inset -2px 0 #217346' : 'none')};

  &:last-child {
    border: none;
  }
`;

const Canvas = styled.div`
  flex: 1;
  min-width: 0;
  background: #fff;
  border-right: 1px solid #b5b5b5;
`;

const MainMenu = styled.nav`
  display: flex;
  height: 41px;
  background: #404040;
  color: #fff;
`;

const Brand = styled.div`
  display: flex;
  align-items: center;
  gap: 2px;
  width: 112px;
  padding-left: 14px;
`;

const BrandName = styled.span`
  font-size: 12px;
`;

const BrandTag = styled.span`
  margin-left: 2px;
  padding: 1px 0 1px 3px;
  border-left: 1px solid #999;
  font-size: 5px;
  line-height: 5px;
  color: #ccc;
`;

const MenuLink = styled.a`
  display: flex;
  align-items: center;
  justify-content: center;
  width: ${(props) => props.$width}px;
  padding: 0 8px;
  font-size: 10px;
  font-weight: 700;
  line-height: 14px;
  text-align: center;
  text-decoration: none;
  color: #fff;
  background: ${(props) => (props.$active ? BLUE : 'transparent')};
`;

const SubMenu = styled.nav`
  display: flex;
  align-items: flex-end;
  height: 32px;
  padding-left: 89px;
  background: ${BLUE};
  border-bottom: 1px solid #8f9aa6;
`;

const SubLink = styled.a`
  width: ${(props) => (props.$active ? 119 : 107)}px;
  height: 25px;
  font-size: 10px;
  font-weight: 700;
  line-height: 26px;
  text-align: center;
  text-decoration: none;
  color: ${(props) => (props.$active ? '#404040' : '#fff')};
  background: ${(props) => (props.$active ? '#fff' : 'transparent')};
`;

const Dashboard = styled.div`
  display: grid;
  grid-template-columns: 220fr 220fr 660fr;
  column-gap: 10px;
  padding: 8px 16px 13px 21px;
`;

const Fields = styled.div`
  display: grid;
  grid-auto-rows: 68px;
`;

const Field = styled.div`
  display: flex;
  flex-direction: column;
  justify-content: flex-end;
`;

const FieldLabel = styled.div`
  padding: 0 12px 3px;
  font-size: 14px;
  font-weight: 700;
  line-height: 18px;
  color: #000;
`;

const StatBox = styled.output`
  height: 40px;
  border: 1px solid #d9d9d9;
  background: #f2f2f2;
  font-size: 15px;
  font-weight: 700;
  line-height: 38px;
  text-align: center;
  color: #404040;
`;

const LawyerSelect = styled.select`
  appearance: none;
  height: 40px;
  border: 1px solid #d9d9d9;
  font-size: 15px;
  font-weight: 700;
  text-align: center;
  text-align-last: center;
  color: #fff;
  background: ${(props) => props.$color};
`;

const Charts = styled.div`
  min-width: 0;
`;

const ChartTitle = styled.h2`
  display: flex;
  align-items: flex-end;
  height: ${(props) => props.$height}px;
  margin: 0;
  padding: 0 13px ${(props) => props.$gap}px;
  font-size: 14px;
  line-height: 18px;
  color: #000;
`;

const ChartBox = styled.figure`
  margin: 0;
  padding: 11px 7px 1px;
  border: 1px solid #d9d9d9;
  font-size: 9px;
  color: #595959;
`;

const Plot = styled.div`
  display: grid;
  grid-template-columns: repeat(12, 1fr);
  height: ${(props) => props.$height}px;
  background: #f2f2f2;
  border-bottom: 1px solid #d9d9d9;
`;

const Month = styled.div`
  display: flex;
  justify-content: center;
`;

const Series = styled.div`
  display: flex;
  flex-direction: column;
  align-items: center;
  justify-content: flex-end;
  width: 37%;
`;

const ValueLabel = styled.span`
  position: relative;
  z-index: 1;
  margin-bottom: 5px;
  font-size: 8px;
  line-height: 12px;
  color: #404040;
`;

const Bar = styled.div`
  flex-shrink: 0;
  width: 100%;
  background: ${(props) => props.$color};
`;

const Axis = styled.div`
  display: grid;
  grid-template-columns: repeat(12, 1fr);
  padding: 5px 0 3px;
  line-height: 14px;
  text-align: center;
`;

const Legend = styled.figcaption`
  display: flex;
  justify-content: center;
  gap: 8px;
  padding-right: 10px;
  line-height: 14px;
`;

const LegendItem = styled.span`
  display: flex;
  align-items: center;
  gap: 2px;

  &::before {
    content: '';
    width: 6px;
    height: 6px;
    background: ${(props) => props.$color};
  }
`;

const VScroll = styled.div`
  display: flex;
  flex-direction: column;
  width: 13px;
  padding-top: 2px;
`;

const ScrollButton = styled.button`
  display: flex;
  align-items: center;
  justify-content: center;
  flex: 0 0 13px;
  height: 13px;
  border: 1px solid #b5b5b5;
  background: #fff;
  color: #666;
`;

const VTrack = styled.div`
  flex: 1;
  background: #dadada;
`;

const VThumb = styled.div`
  height: 89%;
  border: 1px solid #b5b5b5;
  background: #fff;
`;

const SheetTabs = styled.div`
  display: flex;
  align-items: center;
  height: 25px;
  padding-right: 19px;
  font-size: 11px;
  color: #444;
`;

const TabNav = styled.div`
  display: flex;
  gap: 16px;
  width: 88px;
  padding-left: 22px;
`;

const TabNavButton = styled.button`
  color: #107040;

  &:disabled {
    color: #bcbcbc;
  }
`;

const SheetTab = styled.button`
  width: ${(props) => props.$width}px;
  height: 18px;
  border-left: 1px solid #ababab;
  white-space: nowrap;
`;

const ActiveSheetTab = styled.button`
  align-self: flex-start;
  width: 69px;
  height: 22px;
  border-bottom: 2px solid #217346;
  background: #fff;
  font-weight: 700;
  color: #217346;
`;

const AuxSheetTab = styled.button`
  width: 64px;
  height: 19px;
  margin: 0 3px 0 2px;
  background: ${BLUE};
  color: #1f1f1f;
`;

const HiddenTab = styled.span`
  width: 17px;
  height: 18px;
  border-left: 1px solid #ababab;
  text-align: right;
  line-height: 18px;
  color: #8a7a7a;
`;

const MoreTabs = styled.button`
  width: 20px;
  font-weight: 700;
  color: #217346;
`;

const AddTab = styled.button`
  margin: 0 7px;
`;

const HScroll = styled.div`
  display: flex;
  flex: 1;
  margin-left: 2px;
`;

const HTrack = styled.div`
  flex: 1;
  background: #dadada;
`;

const HThumb = styled.div`
  width: 81%;
  height: 13px;
  border: 1px solid #b5b5b5;
  background: #fff;
`;

const StatusBar = styled.footer`
  display: flex;
  align-items: center;
  height: 18px;
  padding-left: 7px;
  background: #f3f3f3;
  border-top: 1px solid #d2d2d2;
  color: #444;
`;

const Status = styled.span`
  width: 50px;
`;

const StatusRight = styled.div`
  display: flex;
  align-items: center;
  height: 100%;
  margin-left: auto;
  padding-right: 7px;
`;

const ViewButton = styled.button`
  display: flex;
  align-items: center;
  justify-content: center;
  width: 33px;
  height: 100%;
  background: ${(props) => (props.$active ? '#c5c5c5' : 'transparent')};
`;

const ZoomButton = styled.button`
  width: 14px;
  font-size: 13px;
  font-weight: 700;
  line-height: 16px;
`;

const ZoomRange = styled.input`
  appearance: none;
  width: 86px;
  height: 12px;
  background: linear-gradient(#bdbdbd, #bdbdbd) center / 100% 1px no-repeat;

  &::-webkit-slider-thumb {
    appearance: none;
    width: 4px;
    height: 10px;
    background: #666;
  }
`;

const ZoomValue = styled.span`
  width: 26px;
  text-align: right;
`;

const TaskbarEdge = styled.div`
  height: 2px;
  background: linear-gradient(to right, #222 4%, #dcdcdc 4%, #dcdcdc 28%, #222 28%, #222 50%, #555 50%, #555 54%, #222 54%);
`;
